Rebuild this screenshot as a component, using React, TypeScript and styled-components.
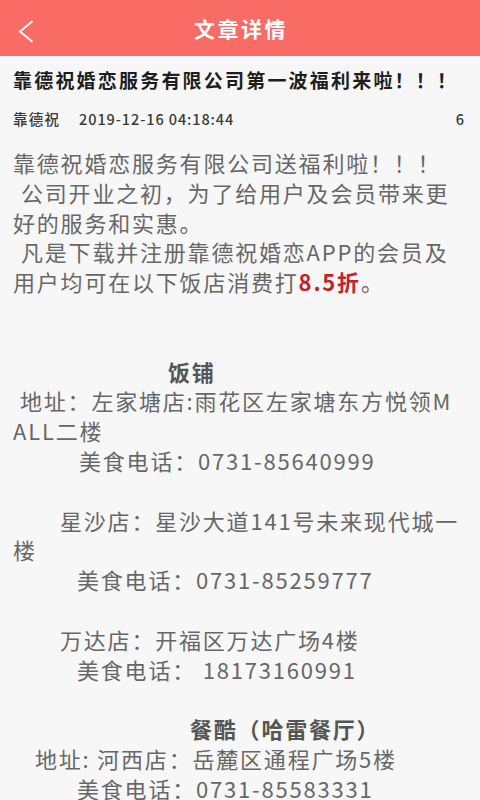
import React from 'react';
import styled, { createGlobalStyle } from 'styled-components';

const GlobalStyle = createGlobalStyle`
  html, body {
    margin: 0;
    padding: 0;
    background: #f7f7f7;
  }
  body {
    font-family: "Noto Sans CJK SC", "Noto Sans", sans-serif;
  }
`;

const LINE = 29.8;

const Page = styled.div`
  width: 480px;
  min-height: 800px;
  background: #f7f7f7;
`;

const Header = styled.header`
  height: 56px;
  background: #f96b65;
  display: grid;
  grid-template-columns: 56px 1fr 56px;
  align-items: center;
`;

const BackButton = styled.button`
  border: none;
  background: transparent;
  padding: 7px 0 0 18px;
  height: 56px;
  display: flex;
  align-items: center;
  justify-content: flex-start;
  cursor: pointer;

  svg {
    display: block;
  }
`;

const HeaderTitle = styled.h1`
  margin: 0;
  text-align: center;
  color: #fff;
  font-size: 21px;
  font-weight: 700;
  letter-spacing: 2.5px;
  padding-left: 2px;
`;

const Article = styled.article`
  padding: 0 15px 0 13px;
`;

const Title = styled.h2`
  margin: 0;
  padding-top: 10px;
  font-size: 19px;
  line-height: 28px;
  font-weight: 700;
  letter-spacing: 2.2px;
  color: #1e1e1e;
  white-space: nowrap;
`;

const Meta = styled.div`
  display: flex;
  align-items: center;
  height: 22px;
  margin-top: 13px;
  padding-right: 1px;
  font-size: 14.5px;
  font-weight: 500;
  color: #3a3a3a;
`;

const Author = styled.span`
  letter-spacing: 1.2px;
  margin-right: 19px;
`;

const PublishTime = styled.span`
  letter-spacing: 0.9px;
`;

const Views = styled.span`
  margin-left: auto;
`;

const Body = styled.div`
  margin-top: 19px;
  font-size: 22px;
  line-height: ${LINE}px;
  letter-spacing: 1.8px;
  color: #676767;
  word-break: break-all;
`;

const Para = styled.p<{ $indent: number; $strong: boolean; $space: number }>`
  margin: ${(p) => p.$space * LINE}px 0 0;
  text-indent: ${(p) => p.$indent}px;
  font-weight: ${(p) => (p.$strong ? 700 : 400)};
  color: ${(p) => (p.$strong ? '#555' : 'inherit')};
`;

const Discount = styled.strong`
  color: #c3242c;
  font-weight: 700;
  line-height: 1;
`;

interface Line {
  text: React.ReactNode;
  indent?: number;
  strong?: boolean;
  spaceBefore?: number;
}

const lines: Line[] = [
  { text: '靠德祝婚恋服务有限公司送福利啦！！！' },
  { text: '公司开业之初，为了给用户及会员带来更好的服务和实惠。', indent: 8 },
  {
    text: (
      <>
        凡是下载并注册靠德祝婚恋APP的会员及用户均可在以下饭店消费打<Discount>8.5折</Discount>。
      </>
    ),
    indent: 8,
  },
  { text: '饭铺', indent: 155, strong: true, spaceBefore: 2 },
  { text: '地址：左家塘店:雨花区左家塘东方悦领MALL二楼', indent: 7 },
  { text: '美食电话：0731-85640999', indent: 66 },
  { text: '星沙店：星沙大道141号未来现代城一楼', indent: 47, spaceBefore: 1 },
  { text: '美食电话：0731-85259777', indent: 64 },
  { text: '万达店：开福区万达广场4楼', indent: 47, spaceBefore: 1 },
  { text: '美食电话： 18173160991', indent: 64 },
  { text: '餐酷（哈雷餐厅）', indent: 177, strong: true, spaceBefore: 1 },
  { text: '地址: 河西店：岳麓区通程广场5楼', indent: 22 },
  { text: '美食电话：0731-85583331', indent: 64 },
];

export default function App() {
  return (
    <>
      <GlobalStyle />
      <Page>
        <Header>
          <BackButton aria-label="返回">
            <svg width="16" height="24" viewBox="0 0 16 24" fill="none">
              <polyline
                points="14,1.5 2,11.5 14,21.5"
                stroke="#fff"
                strokeWidth="1.8"
                strokeLinecap="round"
                strokeLinejoin="round"
              />
            </svg>
          </BackButton>
          <HeaderTitle>文章详情</HeaderTitle>
          <span />
        </Header>

        <Article>
          <Title>靠德祝婚恋服务有限公司第一波福利来啦！！！</Title>
          <Meta>
            <Author>靠德祝</Author>
            <PublishTime>2019-12-16 04:18:44</PublishTime>
            <Views>6</Views>
          </Meta>

          <Body>
            {lines.map((line, i) => (
              <Para
                key={i}
                $indent={line.indent ?? 0}
                $strong={!!line.strong}
                $space={line.spaceBefore ?? 0}
              >
                {line.text}
              </Para>
            ))}
          </Body>
        </Article>
      </Page>
    </>
  );
}
